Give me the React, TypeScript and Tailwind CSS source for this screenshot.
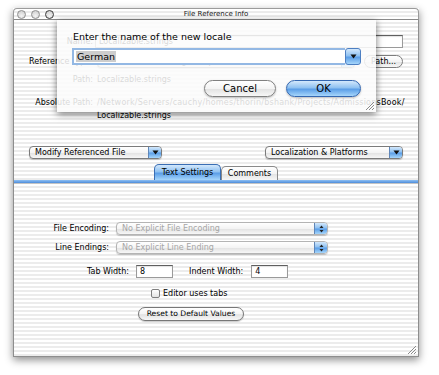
import React from 'react';

const stripes =
  'bg-[repeating-linear-gradient(to_bottom,#ffffff_0px,#ffffff_2px,#ececec_2px,#ececec_4px)]';
const blueGel =
  'bg-[linear-gradient(to_bottom,#d3e8fc_0%,#8fc1f1_45%,#5b9ee7_55%,#a6d6fb_100%)]';
const whiteGel =
  'bg-[linear-gradient(to_bottom,#ffffff_0%,#f4f4f4_50%,#e3e3e3_55%,#f7f7f7_100%)]';

const DownArrow = ({ size = 5 }: { size?: number }) => (
  <svg width={size + 2} height={size} viewBox="0 0 7 5">
    <path d="M0.5 0.5 L6.5 0.5 L3.5 4.5 Z" fill="#111" />
  </svg>
);

const Stepper = () => (
  <svg width="5" height="8" viewBox="0 0 5 8">
    <path d="M2.5 0.5 L4.5 3 L0.5 3 Z" fill="#222" />
    <path d="M0.5 5 L4.5 5 L2.5 7.5 Z" fill="#222" />
  </svg>
);

const Grip = () => (
  <svg width="11" height="11" viewBox="0 0 11 11">
    <path d="M10 2 L2 10 M10 5 L5 10 M10 8 L8 10" stroke="#8a8a8a" strokeWidth="1" />
    <path d="M10.8 2.8 L2.8 10.8 M10.8 5.8 L5.8 10.8 M10.8 8.8 L8.8 10.8" stroke="#ffffff" strokeWidth="0.8" />
  </svg>
);

function Popup({
  label,
  className,
  disabled,
  stepper,
}: {
  label: string;
  className: string;
  disabled?: boolean;
  stepper?: boolean;
}) {
  return (
    <div
      className={`flex h-[13px] items-stretch rounded-[4px] border ${whiteGel} shadow-[0_1px_1px_rgba(0,0,0,0.2)] ${
        disabled ? 'border-[#b4b4b4]' : 'border-[#7b7b7b]'
      } ${className}`}
    >
      <span
        className={`flex-1 truncate pl-[5px] text-[8px] leading-[11px] ${
          disabled ? 'text-[#a6a6a6]' : 'text-black'
        }`}
      >
        {label}
      </span>
      <span
        className={`flex w-[13px] items-center justify-center rounded-r-[3px] border-l border-[#5f86b8] ${blueGel}`}
      >
        {stepper ? <Stepper /> : <DownArrow />}
      </span>
    </div>
  );
}

const Field = ({ value, className }: { value: string; className: string }) => (
  <div
    className={`h-[13px] border border-[#9a9a9a] border-t-[#5f5f5f] bg-white pl-[3px] text-[8px] leading-[11px] shadow-[inset_0_1px_1px_rgba(0,0,0,0.12)] ${className}`}
  >
    {value}
  </div>
);

export default function App() {
  return (
    <div className="h-[375px] w-[439px] overflow-hidden bg-white pl-[13px] pt-[8px] font-['DejaVu_Sans','Noto_Sans',sans-serif] text-black">
      <div className="relative flex h-[349px] w-[406px] flex-col shadow-[0_3px_8px_rgba(0,0,0,0.45)]">
        {/* title bar */}
        <div
          className={`grid h-[12px] grid-cols-[1fr_auto_1fr] items-center rounded-t-[4px] border border-b border-[#9b9b9b] border-b-[#8a8a8a] ${stripes}`}
        >
          <div className="flex gap-[5px] pl-[3px]">
            <span className="h-[9px] w-[9px] rounded-full border border-[#8f8f8f] bg-[radial-gradient(circle_at_50%_70%,#f4f4f4,#c9c9c9)]" />
            <span className="h-[9px] w-[9px] rounded-full border border-[#8f8f8f] bg-[radial-gradient(circle_at_50%_70%,#f4f4f4,#c9c9c9)]" />
            <span className="h-[9px] w-[9px] rounded-full border-[1.5px] border-[#3c3c3c] bg-[radial-gradient(circle_at_50%_70%,#f4f4f4,#c9c9c9)]" />
          </div>
          <div className="text-[7px] leading-[10px] text-[#1a1a1a]">File Reference Info</div>
          <div />
        </div>

        {/* window body */}
        <div className={`relative flex flex-1 flex-col border-x border-b border-[#8e8e8e] ${stripes}`}>
          {/* name */}
          <div className="mt-[15px] flex h-[13px] items-center">
            <div className="w-[79px] text-right text-[8px]">Name:</div>
            <Field value="Localizable.strings" className="ml-[2px] w-[308px]" />
          </div>

          {/* reference style */}
          <div className="mt-[7px] flex h-[13px] items-center">
            <div className="w-[79px] text-right text-[8px]">Reference Type:</div>
            <Popup label="Relative to Enclosing Group" className="ml-[4px] w-[258px]" />
            <div
              className={`ml-[9px] h-[13px] w-[39px] rounded-full border border-[#7d7d7d] text-center text-[8px] leading-[11px] ${whiteGel}`}
            >
              Path...
            </div>
          </div>

          {/* path */}
          <div className="mt-[7px] flex h-[10px] items-center text-[8px]">
            <div className="w-[79px] text-right">Path:</div>
            <div className="ml-[4px]">Localizable.strings</div>
          </div>

          {/* absolute path */}
          <div className="mt-[11px] flex text-[8px] leading-[13px]">
            <div className="w-[79px] text-right">Absolute Path:</div>
            <div className="ml-[4px] tracking-[0.22px]">
              <div>/Network/Servers/cauchy/homes/thorin/bshank/Projects/AdmissionsBook/</div>
              <div className="tracking-normal">Localizable.strings</div>
            </div>
          </div>

          {/* popups */}
          <div className="mt-[24px] flex justify-between px-[15px]">
            <Popup label="Modify Referenced File" className="w-[133px]" />
            <Popup label="Localization & Platforms" className="w-[138px]" />
          </div>

          {/* tabs */}
          <div className="mt-[5px] flex h-[16px] items-end justify-center">
            <div
              className={`h-[16px] w-[67px] rounded-t-[5px] border border-b-0 border-[#3a6eb4] text-center text-[8px] leading-[15px] ${blueGel}`}
            >
              Text Settings
            </div>
            <div
              className={`h-[14px] w-[57px] rounded-t-[5px] border border-b-0 border-[#8a8a8a] text-center text-[8px] leading-[13px] ${whiteGel}`}
            >
              Comments
            </div>
          </div>
          <div className="h-[3px] bg-[linear-gradient(to_bottom,#8fc0f3,#4e8ddb)]" />
          <div className="h-[1px] bg-[#c4c4c4]" />

          {/* text settings pane */}
          <div className="mt-[38px] flex h-[13px] items-center">
            <div className="w-[95px] text-right text-[8px]">File Encoding:</div>
            <Popup label="No Explicit File Encoding" className="ml-[7px] w-[212px]" disabled stepper />
          </div>
          <div className="mt-[6px] flex h-[13px] items-center">
            <div className="w-[95px] text-right text-[8px]">Line Endings:</div>
            <Popup label="No Explicit Line Ending" className="ml-[7px] w-[212px]" disabled stepper />
          </div>

          <div className="mt-[11px] flex h-[13px] items-center pl-[73px] text-[8px]">
            <span>Tab Width:</span>
            <Field value="8" className="ml-[7px] w-[37px]" />
            <span className="ml-[16px]">Indent Width:</span>
            <Field value="4" className="ml-[8px] w-[37px]" />
          </div>

          <div className="mt-[11px] flex h-[9px] items-center pl-[137px]">
            <span className="h-[9px] w-[9px] rounded-[2px] border border-[#7f7f7f] bg-[linear-gradient(to_bottom,#ffffff,#e4e4e4)]" />
            <span className="ml-[3px] text-[8px]">Editor uses tabs</span>
          </div>

          <div className="mt-[9px] pl-[124px]">
            <div
              className={`h-[14px] w-[106px] rounded-full border border-[#777] text-center text-[7.6px] leading-[12px] shadow-[0_1px_1px_rgba(0,0,0,0.2)] ${whiteGel}`}
            >
              Reset to Default Values
            </div>
          </div>

          <div className="absolute bottom-[1px] right-[1px]">
            <Grip />
          </div>
        </div>

        {/* sheet */}
        <div className="absolute left-[44px] top-[12px] h-[92px] w-[319px] bg-[rgba(251,251,251,0.86)] px-[15px] pt-[11px] shadow-[0_2px_7px_rgba(0,0,0,0.55)]">
          <div className="pl-[1px] text-[9.5px] leading-[12px]">Enter the name of the new locale</div>
          <div className="mt-[5px] flex h-[17px] items-stretch">
            <div className="flex flex-1 items-center border-2 border-r-0 border-[#93b8e4] bg-white pl-[2px]">
              <span className="bg-[#cdcdcd] px-[1px] text-[9.5px] leading-[11px]">German</span>
            </div>
            <div
              className={`flex w-[16px] items-center justify-center rounded-[3px] border border-[#4d7fc2] ${blueGel}`}
            >
              <DownArrow size={5} />
            </div>
          </div>
          <div className="mt-[15px] flex justify-end gap-[10px]">
            <div
              className={`h-[17px] w-[72px] rounded-full border border-[#808080] text-center text-[10px] leading-[15px] shadow-[0_1px_2px_rgba(0,0,0,0.25)] ${whiteGel}`}
            >
              Cancel
            </div>
            <div
              className={`h-[17px] w-[75px] rounded-full border border-[#3467b0] text-center text-[10px] leading-[15px] shadow-[0_1px_2px_rgba(0,0,0,0.25)] ${blueGel}`}
            >
              OK
            </div>
          </div>
          <div className="absolute bottom-[1px] right-[1px]">
            <Grip />
          </div>
        </div>
      </div>
    </div>
  );
}
